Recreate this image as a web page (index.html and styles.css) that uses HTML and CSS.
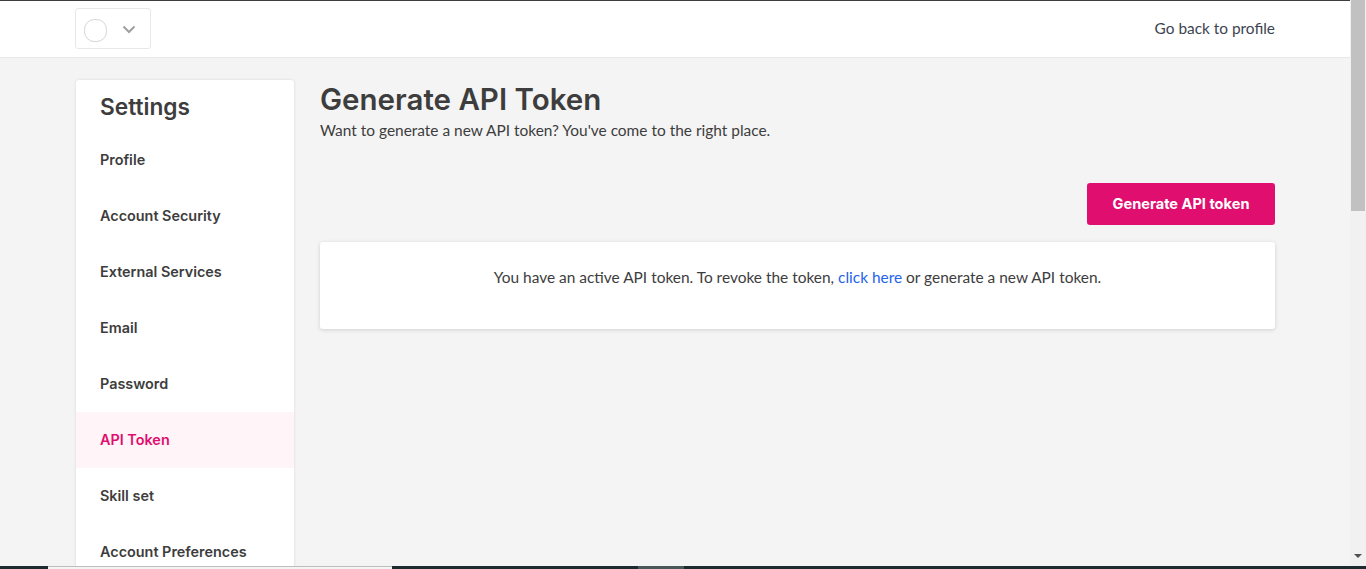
FILE: index.html
```html
<!DOCTYPE html>
<html lang="en">
<head>
<meta charset="utf-8">
<title>Generate API Token</title>
<link rel="stylesheet" href="styles.css">
</head>
<body>
<div class="window">
  <div class="page">
    <header class="topbar">
      <div class="container topbar-inner">
        <button class="account" type="button">
          <span class="avatar"></span>
          <svg class="chevron" width="14" height="9" viewBox="0 0 14 9"><path d="M1.500 1.500 7 7l5.500-5.500" fill="none" stroke="#a0a0a0" stroke-width="2"/></svg>
        </button>
        <a class="back" href="#">Go back to profile</a>
      </div>
    </header>
    <div class="container main">
      <nav class="sidebar">
        <h2 class="sidebar-title">Settings</h2>
        <a class="nav-item" href="#">Profile</a>
        <a class="nav-item" href="#">Account Security</a>
        <a class="nav-item" href="#">External Services</a>
        <a class="nav-item" href="#">Email</a>
        <a class="nav-item" href="#">Password</a>
        <a class="nav-item active" href="#">API Token</a>
        <a class="nav-item" href="#">Skill set</a>
        <a class="nav-item" href="#">Account Preferences</a>
      </nav>
      <section class="content">
        <h1 class="title">Generate API Token</h1>
        <p class="subtitle">Want to generate a new API token? You've come to the right place.</p>
        <div class="actions"><button class="primary" type="button">Generate API token</button></div>
        <div class="card">You have an active API token. To revoke the token, <a href="#">click here</a> or generate a new API token.</div>
      </section>
    </div>
  </div>
  <div class="scrollbar">
    <div class="thumb"></div>
    <div class="arrow"></div>
  </div>
</div>
<div class="taskbar"><span class="tb-light"></span><span class="tb-mid"></span></div>
</body>
</html>
```
FILE: styles.css
```css
* { box-sizing: border-box; }
html, body { margin: 0; height: 569px; overflow: hidden; }
body { font-family: Lato, "Liberation Sans", sans-serif; color: #3d3d3d; background: #f4f4f4; }
.window { display: flex; height: 569px; }
.page { flex: 1; min-width: 0; display: flex; flex-direction: column; overflow: hidden; }
.container { width: 100%; padding: 0 75px; }
.topbar { height: 58px; flex: none; background: #fff; border-top: 1px solid #3d3d3d; border-bottom: 1px solid #e8e8e8; }
.topbar-inner { display: flex; justify-content: space-between; align-items: center; height: 56px; }
.account { width: 76px; height: 41px; margin-top: -1px; padding: 0 0 0 8px; display: flex; align-items: center; gap: 15px; background: #fff; border: 1px solid #e8e8e8; border-radius: 3px; }
.avatar { width: 23px; height: 23px; margin-top: 3px; border-radius: 45%; border: 1px solid #d4d4d4; }
.chevron { margin-top: 1px; }
.back { font-size: 15.4px; color: #3d4451; text-decoration: none; margin-top: -2px; }
.main { display: flex; gap: 26px; padding-top: 22px; flex: 1; min-height: 0; }
.sidebar { width: 218px; margin-left: 1px; flex: none; height: 520px; background: #fff; border-radius: 3px; box-shadow: 0 0 3px rgba(0,0,0,.12); }
.sidebar-title { margin: 0; padding: 13px 24px 0; height: 52px; font: 600 22.7px/28px Inter, sans-serif; }
.nav-item { display: flex; align-items: center; height: 56px; padding: 0 0 2px 24px; font: 600 14.4px Inter, sans-serif; color: #3d3d3d; text-decoration: none; }
.nav-item.active { background: #fff5f8; color: #e00e6e; }
.content { flex: 1; min-width: 0; }
.title { margin: 0; font: 600 29.500px/38px Inter, sans-serif; color: #3d3d3d; }
.subtitle { margin: 2px 0 0; font-size: 15.45px; line-height: 20px; }
.actions { display: flex; justify-content: flex-end; margin-top: 43px; }
.primary { width: 188px; height: 42px; padding: 0; border: 0; border-radius: 3px; background: #e00e6e; color: #fff; font: 700 14.6px Inter, sans-serif; }
.card { margin-top: 17px; height: 87px; padding-top: 25px; text-align: center; font-size: 15.45px; line-height: 20px; background: #fff; border-radius: 3px; box-shadow: 0 1px 4px rgba(0,0,0,.15); }
.card a { color: #2463eb; text-decoration: none; }
.scrollbar { width: 16px; flex: none; position: relative; background: #f1f1f1; }
.thumb { width: 14px; height: 211px; margin-left: 1px; background: #c1c1c1; }
.arrow { position: absolute; left: 4px; bottom: 11px; border: 4px solid transparent; border-top-color: #505050; border-bottom: 0; }
.taskbar { position: fixed; left: 0; right: 0; bottom: 0; height: 3px; background: #1c2b2e; }
.tb-light { position: absolute; left: 48px; width: 344px; top: 0; height: 3px; background: #f4f4f4; border-top: 1px solid #bdbdbd; }
.tb-mid { position: absolute; left: 638px; width: 46px; top: 0; height: 3px; background: #4a5657; }
```
